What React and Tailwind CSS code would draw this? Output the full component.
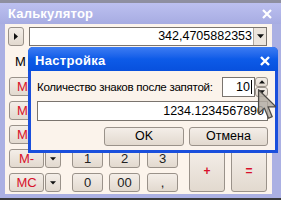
import React from "react";

const btn =
  "flex items-center justify-center rounded-[3px] border border-[#9a928a] bg-gradient-to-b from-[#f4eee8] to-[#e2d9cf] leading-none";

function TriDown({ size = 7 }) {
  return (
    <svg width={size} height={Math.ceil(size / 2) + 1} viewBox="0 0 8 5">
      <path d="M0 0H8L4 4.5Z" fill="#111" />
    </svg>
  );
}
function TriUp({ size = 7 }) {
  return (
    <svg width={size} height={Math.ceil(size / 2) + 1} viewBox="0 0 8 5">
      <path d="M0 4.5H8L4 0Z" fill="#111" />
    </svg>
  );
}

export default function App() {
  return (
    <div className="relative w-[281px] h-[200px] overflow-hidden bg-[#5a5a60] font-['Liberation_Sans',Arial,sans-serif] select-none">
      <div className="h-[3px] bg-[#8e8fa0]" />
      {/* Calculator window */}
      <div className="flex flex-col h-[195px] bg-[#abb0e3]">
        <div className="h-[21px] flex items-center justify-between pl-[8px] pr-[9px] bg-gradient-to-b from-[#bcc0f0] to-[#a7ace2]">
          <span className="text-white font-bold text-[13px] leading-none tracking-[0.2px]">Калькулятор</span>
          <svg width="10" height="10" viewBox="0 0 10 10">
            <path d="M1 1L9 9M9 1L1 9" stroke="#fff" strokeWidth="2.2" />
          </svg>
        </div>
        <div className="flex-1 ml-[5px] mr-[9px] mb-[4px] bg-[#fcf4ec] flex flex-col pt-[3px] pl-[4px]">
          {/* row 1 */}
          <div className="flex h-[19px] items-stretch">
            <div className={btn + " w-[16px] ml-[-1px]"}>
              <svg width="4" height="7" viewBox="0 0 4 7">
                <path d="M0 0V7L4 3.5Z" fill="#111" />
              </svg>
            </div>
            <div className="ml-[5px] w-[238px] flex border border-[#7a746e] bg-white">
              <div className="flex-1 flex items-center justify-end pr-[1px] text-[12.5px] text-black leading-none">
                342,4705882353
              </div>
              <div className="w-[13px] flex items-center justify-center border-l border-[#b0a89f] bg-[#ece5dd]">
                <TriDown />
              </div>
            </div>
          </div>
          {/* label row */}
          <div className="h-[31px] flex items-center pl-[6px] text-[13px] text-black leading-none">М</div>
          {/* buttons grid */}
          <div className="grid grid-cols-[35px_1px_16px_11px_31px_6px_31px_7px_31px_11px_36px_6px_36px] grid-rows-[19px_19px_19px_19px_19px] gap-y-[5px] text-[13px]">
            {["MR", "MS", "M+", "M-", "MC"].map((t, i) => (
              <div
                key={t}
                className={btn + " col-start-1 text-[#d8102a]"}
                style={{ gridRowStart: i + 1 }}
              >
                {i < 3 ? <span className="pl-[7px] w-full text-left">M</span> : t}
              </div>
            ))}
            {[1, 2, 3, 4, 5].map((r) => (
              <div key={r} className={btn + " col-start-3"} style={{ gridRowStart: r }}>
                <TriDown size={6} />
              </div>
            ))}
            {[
              ["", "", ""],
              ["", "", ""],
              ["", "", ""],
              ["1", "2", "3"],
              ["0", "00", ","],
            ].map((row, ri) =>
              row.map((t, ci) => (
                <div
                  key={ri + "-" + ci}
                  className={btn + " text-[#222]"}
                  style={{ gridRowStart: ri + 1, gridColumnStart: 5 + ci * 2 }}
                >
                  {t}
                </div>
              ))
            )}
            <div className={btn + " col-start-11 row-start-1"} />
            <div className={btn + " col-start-13 row-start-1"} />
            <div className={btn + " col-start-11 row-start-2"} />
            <div className={btn + " col-start-13 row-start-2"} />
            <div className={btn + " col-start-11 row-start-3"} />
            <div className={btn + " col-start-13 row-start-3"} />
            <div className={btn + " col-start-11 row-start-4 row-span-2 text-[#d8102a] font-bold text-[12px]"}>+</div>
            <div className={btn + " col-start-13 row-start-4 row-span-2 text-[#d8102a] font-bold text-[12px]"}>=</div>
          </div>
        </div>
      </div>
      <div className="h-[2px] bg-[#3a3a3a]" />

      {/* Dialog window */}
      <div className="absolute left-[28px] top-[47px] w-[250px] h-[106px] flex flex-col rounded-t-[5px] overflow-hidden bg-[#1a4fdc]">
        <div className="h-[24px] flex items-center justify-between pl-[7px] pr-[8px] bg-gradient-to-b from-[#3c7cf2] via-[#0d5be8] to-[#0850dd]">
          <span className="text-white font-bold text-[13px] leading-none tracking-[0.3px] mt-[3px]">Настройка</span>
          <svg width="10" height="10" viewBox="0 0 10 10" className="mt-[3px]">
            <path d="M1 1L9 9M9 1L1 9" stroke="#fff" strokeWidth="2.4" />
          </svg>
        </div>
        <div className="flex-1 mx-[3px] mb-[3px] bg-[#fbf3eb] flex flex-col pt-[6px] pl-[6px] pr-[7px]">
          <div className="flex h-[20px] items-stretch">
            <div className="flex-1 flex items-center whitespace-nowrap text-[11.6px] tracking-[-0.3px] text-black leading-none">
              Количество знаков после запятой:
            </div>
            <div className="w-[33px] flex items-center justify-end border border-[#7a746e] bg-white pr-[2px] text-[12.5px] text-black leading-none">
              10
              <span className="ml-[1px] w-[1px] h-[14px] bg-black" />
            </div>
            <div className="w-[13px] flex flex-col">
              <div className={btn + " flex-1 rounded-[2px]"}>
                <TriUp size={6} />
              </div>
              <div className={btn + " flex-1 rounded-[2px]"}>
                <TriDown size={6} />
              </div>
            </div>
          </div>
          <div className="mt-[4px] h-[20px] flex items-center justify-end border border-[#7a746e] bg-white pr-[3px] text-[12.5px] text-black leading-none">
            1234.1234567890
          </div>
          <div className="mt-[6px] flex justify-end gap-[5px]">
            <div className={btn + " w-[80px] h-[19px] text-[12.5px] text-black"}>OK</div>
            <div className={btn + " w-[79px] h-[19px] text-[12.5px] text-black"}>Отмена</div>
          </div>
        </div>
      </div>

      {/* Mouse cursor */}
      <svg
        className="absolute left-[257px] top-[88px]"
        width="19"
        height="32"
        viewBox="0 0 12 20"
      >
        <path
          d="M1 1L1 16L4.6 12.6L7.3 19L9.6 18L7 11.8L12 11.8Z"
          fill="#b3aca2"
          fillOpacity="0.85"
          stroke="#4d4a46"
          strokeWidth="0.8"
          strokeLinejoin="round"
        />
      </svg>
    </div>
  );
}
